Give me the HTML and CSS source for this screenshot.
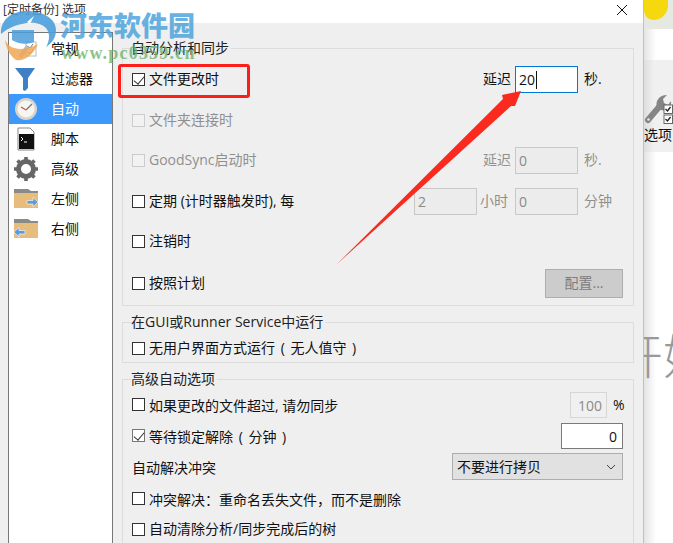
FILE: index.html
```html
<!DOCTYPE html>
<html lang="zh">
<head>
<meta charset="utf-8">
<title>定时备份 选项</title>
<link rel="stylesheet" href="styles.css">
</head>
<body>
<div class="stage">
  <section class="window">
    <header class="titlebar">
      <span class="title">[定时备份] 选项</span>
      <svg class="close" width="12" height="12" viewBox="0 0 12 12"><path d="M1 1L11 11M11 1L1 11" stroke="#111" stroke-width="1"/></svg>
    </header>
    <div class="content">
      <nav class="sidebar">
        <div class="nav-item">
          <svg class="nav-icon" width="24" height="24" viewBox="0 0 24 24"><rect x="12" y="5" width="10" height="14" fill="#fff" stroke="#bbb"/><path d="M14 9l2 2 3-4M14 15l2 2 3-4" stroke="#777" fill="none"/><path d="M6 20L14 9" stroke="#bbb" stroke-width="4"/></svg>
          <span>常规</span>
        </div>
        <div class="nav-item">
          <svg class="nav-icon" width="24" height="24" viewBox="0 0 24 24"><path d="M1 1H21L14 11V21L11 24L9 23V11Z" fill="#3f7fc4"/></svg>
          <span>过滤器</span>
        </div>
        <div class="nav-item active">
          <svg class="nav-icon" width="24" height="24" viewBox="0 0 24 24"><circle cx="12" cy="12" r="11" fill="#d8d4cc"/><circle cx="12" cy="12" r="8.5" fill="#f7f5f0"/><path d="M12 13L18 7" stroke="#777" stroke-width="1.2"/><path d="M12 13L7 10" stroke="#d9534f" stroke-width="1.4"/></svg>
          <span>自动</span>
        </div>
        <div class="nav-item">
          <svg class="nav-icon" width="24" height="24" viewBox="0 0 24 24"><path d="M4 1H16L20 5V23H4Z" fill="#fff" stroke="#888"/><rect x="5" y="7" width="15" height="15" fill="#111"/><path d="M7 10l2 2-2 2M10 15h3" stroke="#fff" fill="none"/></svg>
          <span>脚本</span>
        </div>
        <div class="nav-item">
          <svg class="nav-icon" width="24" height="24" viewBox="0 0 24 24"><circle cx="12" cy="12" r="7.5" fill="none" stroke="#666" stroke-width="5"/><path d="M12 0V24M0 12H24M3.5 3.5L20.5 20.5M20.5 3.5L3.5 20.5" stroke="#666" stroke-width="3.6" stroke-dasharray="4 16 4 0"/></svg>
          <span>高级</span>
        </div>
        <div class="nav-item">
          <svg class="nav-icon" width="24" height="24" viewBox="0 0 24 24"><path d="M0 2H14L17 4H24V6H0Z" fill="#8a8a86"/><rect y="6" width="24" height="15" fill="#e6bd7c"/><path d="M13 13.5H19V10.5L24 15L19 20V17H13Z" fill="#5b9be0" stroke="#fff" stroke-width=".6"/></svg>
          <span>左侧</span>
        </div>
        <div class="nav-item">
          <svg class="nav-icon" width="24" height="24" viewBox="0 0 24 24"><path d="M0 2H14L17 4H24V6H0Z" fill="#8a8a86"/><rect y="6" width="24" height="15" fill="#e6bd7c"/><path d="M11 13.5H5V10.5L0 15L5 20V17H11Z" fill="#5b9be0" stroke="#fff" stroke-width=".6"/></svg>
          <span>右侧</span>
        </div>
      </nav>
      <div class="panels">
        <fieldset class="group group-sync">
          <legend>自动分析和同步</legend>
          <div class="row first">
            <span class="check on"></span><span>文件更改时</span>
            <div class="fields">
              <span class="lead">延迟</span><span class="input focus">20<i class="caret"></i></span><span class="unit">秒.</span>
            </div>
          </div>
          <div class="row sp11 off">
            <span class="check"></span><span>文件夹连接时</span>
          </div>
          <div class="row sp10 off">
            <span class="check"></span><span>GoodSync启动时</span>
            <div class="fields">
              <span class="lead">延迟</span><span class="input disabled">0</span><span class="unit">秒.</span>
            </div>
          </div>
          <div class="row sp11">
            <span class="check"></span><span>定期 (计时器触发时), 每</span>
            <div class="fields">
              <span class="input disabled">2</span><span class="mid off">小时</span><span class="input disabled">0</span><span class="unit off">分钟</span>
            </div>
          </div>
          <div class="row sp10">
            <span class="check"></span><span>注销时</span>
          </div>
          <div class="row sp12">
            <span class="check"></span><span>按照计划</span>
            <button class="config" type="button">配置...</button>
          </div>
        </fieldset>
        <fieldset class="group group-gui">
          <legend>在GUI或Runner Service中运行</legend>
          <div class="row wide">
            <span class="check"></span><span>无用户界面方式运行 ( 无人值守 )</span>
          </div>
        </fieldset>
        <fieldset class="group group-adv">
          <legend>高级自动选项</legend>
          <div class="row tall">
            <span class="check"></span><span class="nudge">如果更改的文件超过, 请勿同步</span>
            <div class="fields"><span class="input small disabled-light">100</span><span class="pct">%</span></div>
          </div>
          <div class="row tall">
            <span class="check on soft"></span><span class="spaced nudge">等待锁定解除 ( 分钟 )</span>
            <span class="input number">0</span>
          </div>
          <div class="row tall">
            <span class="nudge">自动解决冲突</span>
            <div class="select"><span>不要进行拷贝</span><svg width="10" height="6" viewBox="0 0 10 6"><path d="M1 1L5 5L9 1" fill="none" stroke="#444"/></svg></div>
          </div>
          <div class="row tall lower">
            <span class="check"></span><span class="centered-punct">冲突解决：重命名丢失文件，而不是删除</span>
          </div>
          <div class="row last">
            <span class="check"></span><span>自动清除分析/同步完成后的树</span>
          </div>
        </fieldset>
      </div>
    </div>
  </section>
  <aside class="backdrop">
    <div class="sun-strip"><div class="sun"></div></div>
    <div class="toolbar">
      <svg class="tool-icon" width="29" height="30" viewBox="0 0 29 30"><path d="M4 26L15 13" stroke="#858585" stroke-width="6" stroke-linecap="round"/><path d="M13 14C11 7 15 1 23 1L19 5L20 9L24 11L27 7C28 13 23 18 17 16Z" fill="#858585"/><circle cx="4.500" cy="25.500" r="1.300" fill="#e6e6e6"/><rect x="20" y="11" width="8.500" height="8.500" fill="#fff" stroke="#666"/><rect x="20" y="21" width="8.500" height="8.500" fill="#fff" stroke="#666"/><path d="M21.500 15l2 2 3-4M21.500 25l2 2 3-4" stroke="#222" stroke-width="1.300" fill="none"/></svg>
      <span class="tool-label">选项</span>
    </div>
    <div class="big">开始</div>
  </aside>
  <svg class="arrow" width="673" height="543" viewBox="0 0 673 543"><path d="M336 265L503 99L502 95L521 91L515 106L511 106Z" fill="#fa2a1e"/></svg>
  <div class="highlight"></div>
  <div class="watermark">
    <svg class="wm-logo" width="58" height="62" viewBox="0 0 58 62"><path d="M1 34C0 20 12 11 26 11C42 11 56 18 56 30C56 38 52 43 46 47C50 40 50 33 46 28C40 22 30 22 22 24C12 26 6 30 1 34Z" fill="#4b9edb" opacity=".9"/><path d="M12 30H34V42C26 45 18 44 12 40Z" fill="#4b9edb" opacity=".85"/><path d="M34 16L27 22L30 24Z" fill="#fff"/><path d="M5 40C10 50 22 52 38 44C34 54 24 62 16 60C10 56 6 48 5 40Z" fill="#eea653" opacity=".85"/></svg>
    <div class="wm-name">河东软件园</div>
    <div class="wm-url">www.pc0359.cn</div>
  </div>
</div>
</body>
</html>
```
FILE: styles.css
```css
* { box-sizing: border-box; }
html, body { margin: 0; padding: 0; }
body {
  width: 673px;
  height: 543px;
  overflow: hidden;
  font: 14px/20px "Open Sans", "Noto Sans CJK SC", sans-serif;
  color: #111;
  background: #fff;
}
.stage { position: relative; display: flex; width: 673px; height: 543px; overflow: hidden; }
.window { flex: 0 0 643px; display: flex; flex-direction: column; background: #efefef; }
.titlebar { flex: 0 0 23px; display: flex; align-items: center; justify-content: space-between; padding: 0 15px 0 3px; background: #fff; }
.title { font-size: 12px; color: #333; margin-top: -4px; }
.close { margin-top: -3px; }
.content { flex: 1; display: flex; min-height: 0; padding: 9px 9px 0 8px; gap: 9px; }
.sidebar { flex: 0 0 105px; border: 1px solid #777; border-bottom: 0; background: #fff; padding-top: 1px; }
.nav-item { display: flex; align-items: center; height: 30px; padding-left: 5px; gap: 13px; }
.nav-item.active { background: #3c98fb; color: #fff; }
.nav-icon { flex: none; }
.panels { flex: 1; min-width: 0; display: flex; flex-direction: column; padding-top: 6px; }
.group { flex: none; margin: 0; padding: 0 10px 0 9px; border: 1px solid #dcdcdc; min-width: 0; }
.group legend { padding: 0 2px 0 0; margin-left: -1px; height: 20px; line-height: 20px; color: #222; }
.group-sync { height: 268px; }
.group-gui { height: 51px; margin-top: 6px; }
.group-adv { height: 176px; border-bottom: 0; margin-top: 6px; }
.row { display: flex; align-items: center; gap: 4px; height: 30px; }
.first { margin-top: 6px; }
.sp10 { margin-top: 10px; }
.sp11 { margin-top: 11px; }
.sp12 { margin-top: 12px; }
.wide { word-spacing: 2px; margin-top: 1px; }
.tall { height: 31px; }
.lower { margin-top: 1px; }
.last { height: 30px; }
.nudge { padding-top: 2px; }
.spaced { word-spacing: 2px; }
.centered-punct { font-family: "Noto Sans CJK TC", sans-serif; }
.off, .off .unit { color: #8f8f8f; }
.check { flex: none; width: 13px; height: 13px; border: 1px solid #333; background: #fff; position: relative; }
.off .check { border-color: #ccc; background: #f2f2f2; }
.check.on::after { content: ""; position: absolute; left: 3px; top: 0; width: 5px; height: 9px; border: solid #333; border-width: 0 1.2px 1.2px 0; transform: rotate(40deg); }
.check.soft { border-color: #777; }
.fields { margin-left: auto; display: flex; align-items: center; }
.lead { margin-right: 4px; }
.input { display: block; width: 63px; height: 27px; line-height: 25px; padding: 0 3px; border: 1px solid #7a7a7a; background: #fff; }
.input.focus { border-color: #0078d7; }
.input.disabled { border-color: #c8c8c8; background: #ececec; color: #8a8a8a; }
.caret { display: inline-block; width: 1px; height: 18px; background: #111; vertical-align: -4px; margin-left: 1px; }
.unit { width: 45px; padding-left: 6px; }
.mid { width: 38px; padding-left: 3px; }
.pct { width: 16px; padding-left: 6px; }
.input.small { width: 37px; height: 26px; text-align: right; padding-right: 4px; }
.disabled-light { border-color: #d6d6d6; background: #f0f0f0; color: #8a8a8a; }
.input.number { margin-left: auto; width: 62px; height: 26px; text-align: right; padding-right: 5px; }
.select { margin-left: auto; width: 171px; height: 27px; display: flex; align-items: center; justify-content: space-between; padding: 0 6px 0 4px; background: #e1e1e1; border: 1px solid #adadad; }
.config { margin-left: auto; width: 78px; height: 29px; padding: 0; border: 1px solid #adadad; background: #ccc; color: #7c7c7c; font: inherit; }
.backdrop { flex: 1; min-width: 0; overflow: hidden; display: flex; flex-direction: column; border-left: 1px solid #b9cc92; background: linear-gradient(90deg, #e4e4e4, #fff 12px); }
.sun-strip { flex: 0 0 29px; background: #e6e8e2; }
.sun { width: 24px; height: 20px; background: #f6d80e; border-radius: 0 0 16px 10px; }
.toolbar { margin-top: 31px; height: 92px; background: linear-gradient(90deg, #dedede, #f0f0f0 10px); display: flex; flex-direction: column; align-items: flex-start; padding-top: 34px; }
.tool-label { width: 29px; white-space: nowrap; margin-top: 1px; color: #111; }
.big { margin: 174px 0 0 -29px; width: 110px; white-space: nowrap; font-size: 48px; line-height: 60px; font-weight: 300; color: #999; }
.arrow { position: absolute; left: 0; top: 0; pointer-events: none; }
.highlight { position: absolute; left: 118px; top: 64px; width: 132px; height: 34px; border: 3px solid #fa1f1a; border-radius: 3px; }
.watermark { position: absolute; left: 0; top: 0; width: 200px; height: 62px; pointer-events: none; }
.wm-logo { position: absolute; left: 0; top: 0; }
.wm-name { position: absolute; left: 60px; top: 8px; white-space: nowrap; font: 900 27px/34px "Noto Sans CJK SC", sans-serif; color: #4ea4dd; opacity: .85; }
.wm-url { position: absolute; left: 61px; top: 43px; white-space: nowrap; font: 700 18px/20px "Liberation Serif", serif; color: #6fb56f; opacity: .8; letter-spacing: 1.2px; }
```
